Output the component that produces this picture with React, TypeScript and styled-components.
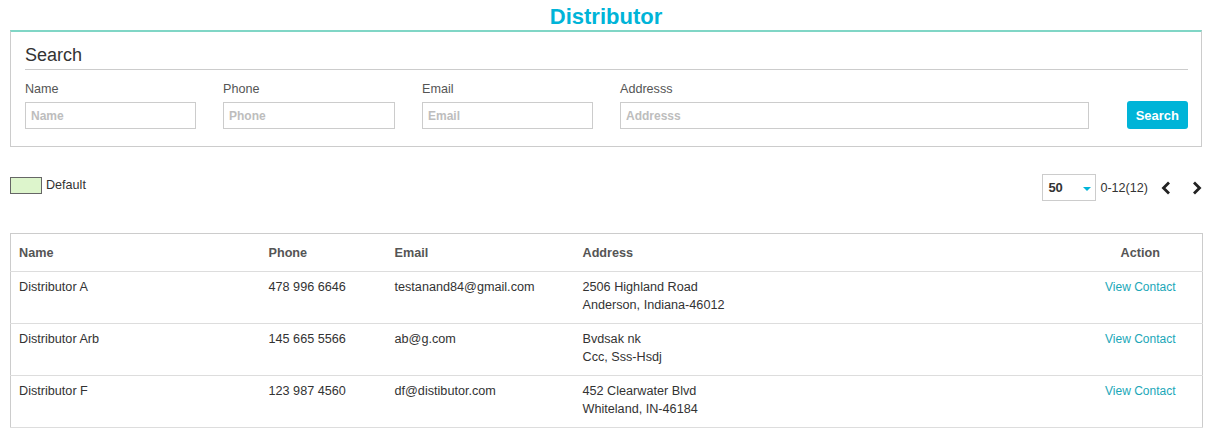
import React from 'react';
import styled, { createGlobalStyle } from 'styled-components';

const GlobalStyle = createGlobalStyle`
  body {
    margin: 0;
    background: #fff;
    font-family: "Liberation Sans", Arial, sans-serif;
    color: #333;
  }
  * {
    box-sizing: border-box;
  }
`;

const Page = styled.div`
  padding: 0 10px;
`;

const Title = styled.h1`
  margin: 0;
  padding-top: 3px;
  height: 30px;
  line-height: 27px;
  text-align: center;
  font-size: 22px;
  font-weight: 700;
  color: #00b4d8;
`;

const Panel = styled.section`
  border: 1px solid #ccc;
  border-top: 2px solid #80d6c6;
  padding: 0 13px 17px 14px;
`;

const PanelHeading = styled.h2`
  margin: 0;
  padding: 12px 0 3px;
  line-height: 22px;
  font-size: 18px;
  font-weight: 400;
  color: #333;
  border-bottom: 1px solid #ccc;
`;

const FilterGrid = styled.div`
  display: grid;
  grid-template-columns: 171px 172px 171px 469px 1fr;
  column-gap: 27px;
  align-items: end;
  margin-top: 11px;
`;

const Field = styled.label`
  display: flex;
  flex-direction: column;
  gap: 5px;
  font-size: 12.6px;
  line-height: 16px;
  color: #555;
`;

const Input = styled.input`
  height: 27px;
  width: 100%;
  border: 1px solid #ccc;
  padding: 0 5px;
  font-family: inherit;
  font-size: 12px;
  color: #333;
  outline: none;

  &::placeholder {
    color: #bdbdbd;
    font-weight: 700;
    font-size: 12px;
  }
`;

const PrimaryButton = styled.button`
  justify-self: end;
  height: 28px;
  padding: 0 9px;
  border: none;
  border-radius: 3px;
  background: #00b4d8;
  color: #fff;
  font-family: inherit;
  font-size: 13px;
  font-weight: 700;
  cursor: pointer;
`;

const Toolbar = styled.div`
  display: flex;
  justify-content: space-between;
  align-items: flex-start;
  margin-top: 27px;
`;

const Legend = styled.div`
  display: flex;
  align-items: center;
  gap: 4px;
  margin-top: 3px;
  font-size: 12.6px;
  line-height: 17px;
  color: #333;
`;

const Swatch = styled.span<{ $color: string }>`
  width: 32px;
  height: 17px;
  border: 1px solid #666;
  background: ${p => p.$color};
`;

const Pager = styled.div`
  display: flex;
  align-items: center;
  font-size: 12.6px;
  color: #333;
`;

const SelectWrap = styled.div`
  position: relative;
  width: 54px;
  height: 27px;
`;

const Select = styled.select`
  appearance: none;
  width: 100%;
  height: 100%;
  border: 1px solid #ccc;
  background: #fff;
  padding: 0 0 0 5px;
  font-family: inherit;
  font-size: 13px;
  font-weight: 700;
  color: #333;
  outline: none;
`;

const SelectArrow = styled.span`
  position: absolute;
  right: 5px;
  top: 13px;
  width: 0;
  height: 0;
  border-left: 4.5px solid transparent;
  border-right: 4.5px solid transparent;
  border-top: 4.5px solid #00b4d8;
  pointer-events: none;
`;

const RangeText = styled.span`
  margin-left: 4px;
`;

const PageButton = styled.button<{ $gap: number }>`
  display: flex;
  align-items: center;
  justify-content: center;
  width: 10px;
  height: 27px;
  margin-left: ${p => p.$gap}px;
  padding: 0;
  border: none;
  background: none;
  color: #222;
  cursor: pointer;
`;

const Table = styled.table`
  width: 100%;
  margin-top: 32px;
  border-collapse: collapse;
  table-layout: fixed;
  border: 1px solid #ccc;
  font-size: 12.65px;
`;

const HeadCell = styled.th<{ $align?: string }>`
  height: 38px;
  padding: 0 8px;
  text-align: ${p => p.$align || 'left'};
  font-weight: 700;
  color: #555;
  border-bottom: 1px solid #ddd;
`;

const Row = styled.tr`
  border-bottom: 1px solid #ddd;
`;

const Cell = styled.td<{ $align?: string }>`
  height: 52px;
  padding: 6px 8px 9px;
  vertical-align: top;
  text-align: ${p => p.$align || 'left'};
  line-height: 18px;
  color: #333;
`;

const ActionLink = styled.a`
  font-size: 12px;
  color: #1aa7b8;
  text-decoration: none;
  cursor: pointer;
`;

const Chevron: React.FC<{ dir: 'left' | 'right' }> = ({ dir }) => (
  <svg width="10" height="14" viewBox="0 0 10 14">
    <polyline
      points={dir === 'left' ? '8,1.5 2.5,7 8,12.5' : '2,1.5 7.5,7 2,12.5'}
      fill="none"
      stroke="currentColor"
      strokeWidth="2.8"
    />
  </svg>
);

const distributors = [
  {
    name: 'Distributor A',
    phone: '478 996 6646',
    email: 'testanand84@gmail.com',
    address: ['2506 Highland Road', 'Anderson, Indiana-46012'],
  },
  {
    name: 'Distributor Arb',
    phone: '145 665 5566',
    email: 'ab@g.com',
    address: ['Bvdsak nk', 'Ccc, Sss-Hsdj'],
  },
  {
    name: 'Distributor F',
    phone: '123 987 4560',
    email: 'df@distibutor.com',
    address: ['452 Clearwater Blvd', 'Whiteland, IN-46184'],
  },
];

const filters = ['Name', 'Phone', 'Email', 'Addresss'];

export default function App() {
  return (
    <Page>
      <GlobalStyle />
      <Title>Distributor</Title>

      <Panel>
        <PanelHeading>Search</PanelHeading>
        <FilterGrid>
          {filters.map(f => (
            <Field key={f}>
              {f}
              <Input placeholder={f} />
            </Field>
          ))}
          <PrimaryButton>Search</PrimaryButton>
        </FilterGrid>
      </Panel>

      <Toolbar>
        <Legend>
          <Swatch $color="#ddf5cc" />
          Default
        </Legend>
        <Pager>
          <SelectWrap>
            <Select defaultValue="50">
              <option value="10">10</option>
              <option value="25">25</option>
              <option value="50">50</option>
              <option value="100">100</option>
            </Select>
            <SelectArrow />
          </SelectWrap>
          <RangeText>0-12(12)</RangeText>
          <PageButton $gap={13}>
            <Chevron dir="left" />
          </PageButton>
          <PageButton $gap={21}>
            <Chevron dir="right" />
          </PageButton>
        </Pager>
      </Toolbar>

      <Table>
        <colgroup>
          <col style={{ width: 250 }} />
          <col style={{ width: 126 }} />
          <col style={{ width: 188 }} />
          <col style={{ width: 504 }} />
          <col style={{ width: 124 }} />
        </colgroup>
        <thead>
          <tr>
            <HeadCell>Name</HeadCell>
            <HeadCell>Phone</HeadCell>
            <HeadCell>Email</HeadCell>
            <HeadCell>Address</HeadCell>
            <HeadCell $align="center">Action</HeadCell>
          </tr>
        </thead>
        <tbody>
          {distributors.map(d => (
            <Row key={d.name}>
              <Cell>{d.name}</Cell>
              <Cell>{d.phone}</Cell>
              <Cell>{d.email}</Cell>
              <Cell>
                {d.address.map(line => (
                  <div key={line}>{line}</div>
                ))}
              </Cell>
              <Cell $align="center">
                <ActionLink>View Contact</ActionLink>
              </Cell>
            </Row>
          ))}
        </tbody>
      </Table>
    </Page>
  );
}
